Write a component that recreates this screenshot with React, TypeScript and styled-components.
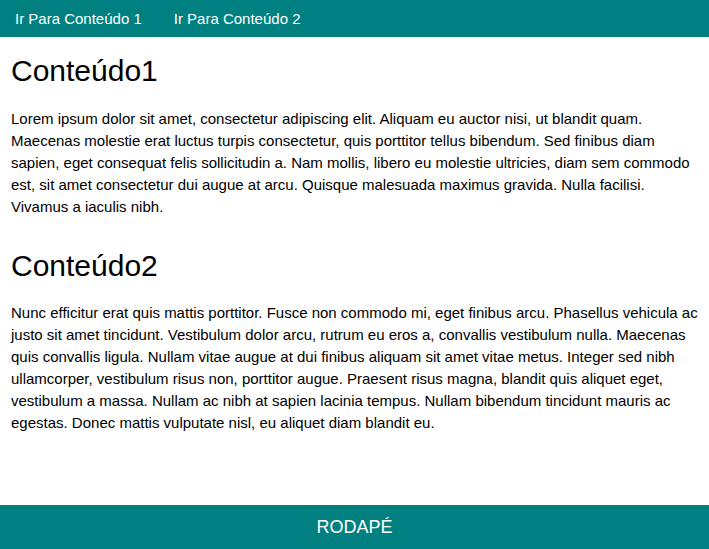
import * as React from 'react';
import styled, { createGlobalStyle } from 'styled-components';

const GlobalStyle = createGlobalStyle`
  html, body {
    margin: 0;
    padding: 0;
  }
  body {
    font-family: 'Liberation Sans', Arial, sans-serif;
    font-size: 15px;
    color: #000;
    background: #fff;
  }
`;

const Page = styled.div`
  display: flex;
  flex-direction: column;
  min-height: 100vh;
`;

const NavBar = styled.nav`
  display: flex;
  align-items: center;
  gap: 32px;
  height: 37px;
  padding: 0 15px;
  background: #008080;
`;

const NavLink = styled.a`
  color: #fff;
  font-size: 15px;
  text-decoration: none;
`;

const Main = styled.main`
  flex: 1;
  display: flex;
  flex-direction: column;
  gap: 31px;
  padding: 17px 10px 0 11px;
`;

const Section = styled.section``;

const Title = styled.h1`
  margin: 0 0 19.5px;
  font-size: 30px;
  font-weight: normal;
  line-height: normal;
`;

const Text = styled.p`
  margin: 0;
  line-height: 22px;
`;

const Footer = styled.footer`
  display: flex;
  align-items: center;
  justify-content: center;
  height: 44px;
  background: #008080;
  color: #fff;
  font-size: 18px;
`;

const sections = [
  {
    id: 'conteudo1',
    title: 'Conteúdo1',
    text:
      'Lorem ipsum dolor sit amet, consectetur adipiscing elit. Aliquam eu auctor nisi, ut blandit quam. Maecenas molestie erat luctus turpis consectetur, quis porttitor tellus bibendum. Sed finibus diam sapien, eget consequat felis sollicitudin a. Nam mollis, libero eu molestie ultricies, diam sem commodo est, sit amet consectetur dui augue at arcu. Quisque malesuada maximus gravida. Nulla facilisi. Vivamus a iaculis nibh.',
  },
  {
    id: 'conteudo2',
    title: 'Conteúdo2',
    text:
      'Nunc efficitur erat quis mattis porttitor. Fusce non commodo mi, eget finibus arcu. Phasellus vehicula ac justo sit amet tincidunt. Vestibulum dolor arcu, rutrum eu eros a, convallis vestibulum nulla. Maecenas quis convallis ligula. Nullam vitae augue at dui finibus aliquam sit amet vitae metus. Integer sed nibh ullamcorper, vestibulum risus non, porttitor augue. Praesent risus magna, blandit quis aliquet eget, vestibulum a massa. Nullam ac nibh at sapien lacinia tempus. Nullam bibendum tincidunt mauris ac egestas. Donec mattis vulputate nisl, eu aliquet diam blandit eu.',
  },
];

const App = () => (
  <Page>
    <GlobalStyle />
    <NavBar>
      <NavLink href="#conteudo1">Ir Para Conteúdo 1</NavLink>
      <NavLink href="#conteudo2">Ir Para Conteúdo 2</NavLink>
    </NavBar>
    <Main>
      {sections.map((s) => (
        <Section key={s.id} id={s.id}>
          <Title>{s.title}</Title>
          <Text>{s.text}</Text>
        </Section>
      ))}
    </Main>
    <Footer>RODAPÉ</Footer>
  </Page>
);

export default App;
